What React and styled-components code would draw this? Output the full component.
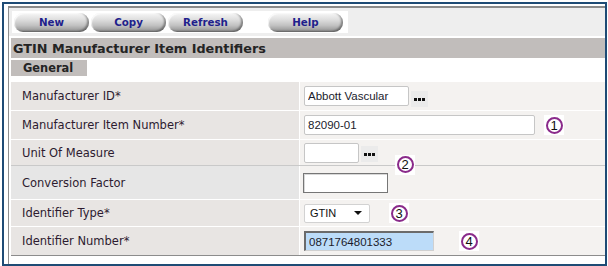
import React from 'react';
import styled, { createGlobalStyle } from 'styled-components';

const GlobalStyle = createGlobalStyle`
  body {
    margin: 0;
    background: #ffffff;
    font-family: "DejaVu Sans", Verdana, sans-serif;
  }
`;

// Outer window frame
const Frame = styled.div`
  box-sizing: border-box;
  width: 605px;
  height: 264px;
  margin: 2px 0 0 2px;
  border: 2px solid #1e4b75;
  padding: 2px 0 0 4px;
  background: #ffffff;
`;

const Panel = styled.div`
  box-sizing: border-box;
  height: 100%;
  border-top: 2px solid #8a8a8a;
  border-left: 1px solid #8f8f8f;
`;

const Toolbar = styled.div`
  display: flex;
  height: 28px;
  box-sizing: border-box;
  padding: 3px 0 0 3px;
  background: #eeeeee;
`;

const ButtonGroup = styled.div`
  display: flex;
  gap: 2px;
  width: 336px;
  height: 22px;
  box-sizing: border-box;
  padding: 2px 0 0 2px;
  background: #ffffff;
`;

const ToolButton = styled.button`
  width: 75px;
  height: 19px;
  margin-left: ${(p) => (p.$spaced ? '23px' : '0')};
  padding: 0 0 1px;
  border: none;
  border-radius: 9px;
  background: linear-gradient(to bottom, #f6f6f6 0%, #dedede 35%, #c2c2c2 65%, #8e8e8e 100%);
  box-shadow: inset -2px -1px 2px rgba(0, 0, 0, 0.35), inset 1px 1px 1px rgba(255, 255, 255, 0.8);
  color: #1f1f8c;
  font-family: "DejaVu Sans", Verdana, sans-serif;
  font-size: 10.3px;
  font-weight: bold;
  cursor: pointer;
`;

const Content = styled.div`
  padding: 2px 0 0 2px;
`;

const TitleBar = styled.div`
  height: 20px;
  padding-left: 2px;
  display: flex;
  align-items: center;
  background: #c1bdbb;
  color: #242424;
  font-size: 12.8px;
  font-weight: bold;
`;

const Tab = styled.div`
  width: 76px;
  height: 16px;
  margin-top: 2px;
  box-sizing: border-box;
  padding-left: 12px;
  display: flex;
  align-items: center;
  background: #c1bdbb;
  color: #242424;
  font-size: 11.4px;
  font-weight: bold;
`;

const FormTable = styled.div`
  margin-top: 5px;
  border-bottom: 1px solid #8c8c8c;
`;

const Row = styled.div`
  display: grid;
  grid-template-columns: 288px 1fr;
  column-gap: 1px;
  box-sizing: border-box;
  height: ${(p) => p.$h}px;
  border-top: 1px solid ${(p) => (p.$divider ? '#c9c9c9' : '#ffffff')};
  background: #ffffff;
`;

const Label = styled.div`
  display: flex;
  align-items: center;
  padding-left: 11px;
  background: ${(p) => (p.$plain ? '#e6e6e6' : '#e8e5e3')};
  color: #2d1b30;
  font-size: 11.5px;
`;

const Value = styled.div`
  display: flex;
  align-items: center;
  padding-left: 4px;
  background: #f4f2f0;
`;

const TextInput = styled.input`
  box-sizing: border-box;
  width: ${(p) => p.$w}px;
  height: 20px;
  margin: 0;
  padding: 0 3px;
  border: 1px solid #c6c6c6;
  border-radius: 2px;
  background: #ffffff;
  color: #1b1b2b;
  font-family: "Liberation Sans", Arial, sans-serif;
  font-size: 11.5px;
  outline: none;

  &.sunken {
    margin-left: -1px;
    border: 1px solid #767676;
    border-radius: 0;
    box-shadow: inset 1px 1px 0 #d8d8d8;
  }

  &.selected {
    border-width: 2px 1px 1px 2px;
    border-style: solid;
    border-color: #6b6b6b #d0d0d0 #d0d0d0 #6b6b6b;
    border-radius: 0;
    background: #bcdcf9;
  }
`;

const LookupButton = styled.button`
  display: flex;
  align-items: center;
  justify-content: center;
  align-self: flex-end;
  width: 17px;
  height: 16px;
  margin: 0 0 3px 2px;
  padding: 0;
  border: none;
  background: #ebebeb;
  cursor: pointer;
`;

const SelectBox = styled.div`
  box-sizing: border-box;
  width: 66px;
  height: 19px;
  display: flex;
  align-items: center;
  justify-content: space-between;
  padding: 0 7px 0 5px;
  border: 1px solid #d2d2d2;
  border-radius: 2px;
  background: #ffffff;
  color: #111111;
  font-family: "Liberation Sans", Arial, sans-serif;
  font-size: 11px;
`;

// Numbered callouts laid over the form
const Callout = styled.span`
  position: relative;
  top: ${(p) => p.$dy || 0}px;
  width: 20px;
  height: 20px;
  margin-left: ${(p) => p.$ml}px;
  display: flex;
  align-items: center;
  justify-content: center;
  background: #ffffff;
`;

const CalloutRing = styled.span`
  box-sizing: border-box;
  width: 17px;
  height: 17px;
  display: flex;
  align-items: center;
  justify-content: center;
  border: 2px solid #8a2a8a;
  border-radius: 50%;
  color: #111111;
  font-family: "Liberation Sans", Arial, sans-serif;
  font-size: 13px;
  line-height: 1;
`;

const Dots = () => (
  <svg width="11" height="3" viewBox="0 0 11 3">
    <rect x="0" y="0" width="3" height="3" fill="#111" />
    <rect x="4" y="0" width="3" height="3" fill="#111" />
    <rect x="8" y="0" width="3" height="3" fill="#111" />
  </svg>
);

const Caret = () => (
  <svg width="8" height="4" viewBox="0 0 8 4">
    <path d="M0 0 L8 0 L4 4 Z" fill="#111" />
  </svg>
);

const Mark = ({ n, ml, dy }) => (
  <Callout $ml={ml} $dy={dy}>
    <CalloutRing>{n}</CalloutRing>
  </Callout>
);

const App = () => (
  <>
    <GlobalStyle />
    <Frame>
      <Panel>
        <Toolbar>
          <ButtonGroup>
            <ToolButton>New</ToolButton>
            <ToolButton>Copy</ToolButton>
            <ToolButton>Refresh</ToolButton>
            <ToolButton $spaced>Help</ToolButton>
          </ButtonGroup>
        </Toolbar>
        <Content>
          <TitleBar>GTIN Manufacturer Item Identifiers</TitleBar>
          <Tab>General</Tab>
          <FormTable>
            <Row $h={29}>
              <Label>Manufacturer ID*</Label>
              <Value>
                <TextInput $w={105} defaultValue="Abbott Vascular" />
                <LookupButton><Dots /></LookupButton>
              </Value>
            </Row>
            <Row $h={29}>
              <Label>Manufacturer Item Number*</Label>
              <Value>
                <TextInput $w={231} defaultValue="82090-01" />
                <Mark n="1" ml={9} />
              </Value>
            </Row>
            <Row $h={26}>
              <Label>Unit Of Measure</Label>
              <Value>
                <TextInput $w={55} defaultValue="" />
                <LookupButton><Dots /></LookupButton>
                <Mark n="2" ml={17} dy={12} />
              </Value>
            </Row>
            <Row $h={34} $divider>
              <Label $plain>Conversion Factor</Label>
              <Value>
                <TextInput className="sunken" $w={85} defaultValue="" />
              </Value>
            </Row>
            <Row $h={27}>
              <Label>Identifier Type*</Label>
              <Value>
                <SelectBox>
                  <span>GTIN</span>
                  <Caret />
                </SelectBox>
                <Mark n="3" ml={19} />
              </Value>
            </Row>
            <Row $h={29}>
              <Label>Identifier Number*</Label>
              <Value>
                <TextInput className="selected" $w={130} defaultValue="0871764801333" />
                <Mark n="4" ml={25} />
              </Value>
            </Row>
          </FormTable>
        </Content>
      </Panel>
    </Frame>
  </>
);

export default App;
